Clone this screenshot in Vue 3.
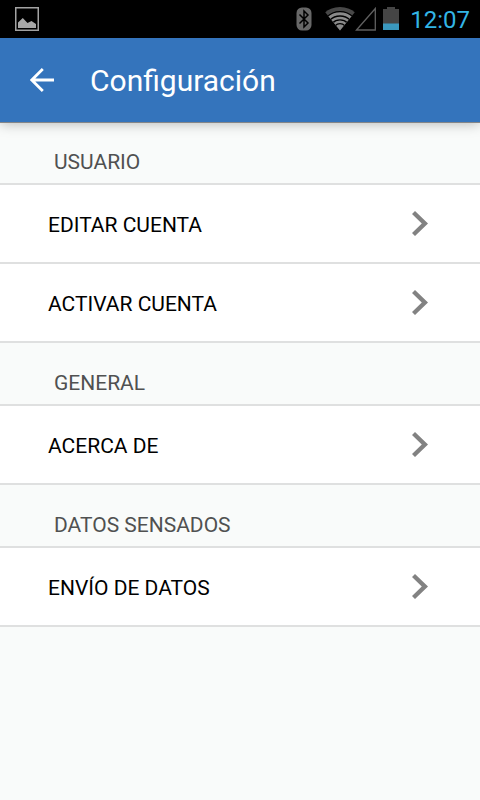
<script setup>
const sections = [
  { id: 'usuario', title: 'USUARIO', items: ['EDITAR CUENTA', 'ACTIVAR CUENTA'] },
  { id: 'general', title: 'GENERAL', items: ['ACERCA DE'] },
  { id: 'datos', title: 'DATOS SENSADOS', items: ['ENVÍO DE DATOS'] },
]
</script>

<template>
  <div class="screen">
    <div class="status-bar">
      <svg class="status-picture" width="24" height="24" viewBox="0 0 24 24" aria-hidden="true">
        <rect x="0.75" y="0.75" width="22.5" height="22.5" fill="none" stroke="#a3a3a3" stroke-width="1.5" />
        <path d="M3 21V15.5L7.8 11L12.5 16L16.5 14L21 17V21Z" fill="#a8a8a8" />
      </svg>
      <div class="status-icons">
        <svg width="16" height="24" viewBox="0 0 16 24" aria-hidden="true">
          <rect x="0.5" y="0.5" width="15" height="23" rx="5.5" fill="#686868" />
          <path d="M3.5 7.5L12 16L8 20V4L12 8L3.5 16.5" fill="none" stroke="#000" stroke-width="1.5" />
        </svg>
        <svg class="wifi" width="30" height="24" viewBox="0 0 30 24" aria-hidden="true">
          <clipPath id="wifi-wedge">
            <path d="M15 23.5L-4 0V-2H34V0Z" />
          </clipPath>
          <g clip-path="url(#wifi-wedge)">
            <circle cx="15" cy="23.5" r="23.5" fill="#484848" />
            <circle cx="15" cy="23.5" r="18.6" fill="#8a8a8a" />
            <g fill="none" stroke="#000" stroke-width="1.3">
              <circle cx="15" cy="23.5" r="18.8" />
              <circle cx="15" cy="23.5" r="14.5" />
              <circle cx="15" cy="23.5" r="10.6" />
              <circle cx="15" cy="23.5" r="6.8" />
            </g>
          </g>
        </svg>
        <svg width="22" height="24" viewBox="0 0 22 24" aria-hidden="true">
          <path d="M1.5 23L20.3 1.5V23Z" fill="none" stroke="#606060" stroke-width="1.3" />
        </svg>
        <svg class="battery" width="16" height="24" viewBox="0 0 16 24" aria-hidden="true">
          <path d="M0 2H4V0H12V2H16V23H0Z" fill="#454545" />
          <rect y="16.5" width="16" height="6.5" fill="#3b99bf" />
        </svg>
      </div>
      <time class="clock" datetime="12:07">12:07</time>
    </div>

    <header class="app-bar">
      <button class="back" type="button" aria-label="Atrás">
        <svg width="24" height="24" viewBox="0 0 24 24" aria-hidden="true">
          <path d="M12.8 1L1.8 12L12.8 23M2 12H24" fill="none" stroke="#fff" stroke-width="2.8" />
        </svg>
      </button>
      <h1 class="title">Configuración</h1>
    </header>

    <main>
      <section v-for="section in sections" :key="section.id" :aria-labelledby="section.id">
        <h2 :id="section.id" class="heading">{{ section.title }}</h2>
        <ul class="list">
          <li v-for="item in section.items" :key="item">
            <button class="row" type="button">
              <span class="label">{{ item }}</span>
              <svg width="16" height="25" viewBox="0 0 16 25" aria-hidden="true">
                <path d="M3 0L16 12.5L3 25L0 22L9.8 12.5L0 3Z" fill="#828282" />
              </svg>
            </button>
          </li>
        </ul>
      </section>
    </main>
  </div>
</template>

<style>
body {
  background: #f9fbfa;
}
</style>

<style scoped>
.screen {
  min-height: 100vh;
  background: #f9fbfa;
  font-family: Roboto, "Liberation Sans", sans-serif;
}

.screen svg {
  display: block;
}

.status-bar {
  display: flex;
  align-items: center;
  height: 38px;
  padding: 0 10px 0 15px;
  background: #000;
}

.status-icons {
  display: flex;
  margin-left: auto;
}

.wifi {
  margin-left: 13px;
}

.battery {
  margin-left: 6px;
}

.clock {
  margin-left: 11px;
  padding-top: 2px;
  font-size: 24px;
  line-height: 36px;
  color: #33b5e5;
}

.app-bar {
  position: relative;
  display: flex;
  align-items: center;
  gap: 36px;
  height: 84px;
  padding: 0 30px;
  background: #3474bc;
  box-shadow: 0 1px 0 #848688, 0 2px 12px rgba(0, 0, 0, 0.26);
}

.back {
  padding: 0;
  border: 0;
  background: none;
  cursor: pointer;
}

.title {
  margin: 0;
  padding-top: 2px;
  font-size: 30px;
  font-weight: 400;
  line-height: 40px;
  color: #fff;
}

.heading {
  margin: 0;
  padding: 28px 54px 9px;
  border-bottom: 2px solid #dfe0e0;
  font-size: 21px;
  font-weight: 400;
  line-height: 24px;
  color: #505151;
}

.list {
  margin: 0;
  padding: 0;
  list-style: none;
}

.row {
  display: flex;
  align-items: center;
  justify-content: space-between;
  width: 100%;
  height: 79px;
  padding: 0 52px 0 48px;
  border: 0;
  border-bottom: 2px solid #dfe0e0;
  background: #fff;
  font-family: inherit;
  font-size: 21px;
  line-height: 24px;
  text-align: left;
  color: #000;
  cursor: pointer;
}

.label {
  padding-top: 2px;
}
</style>
